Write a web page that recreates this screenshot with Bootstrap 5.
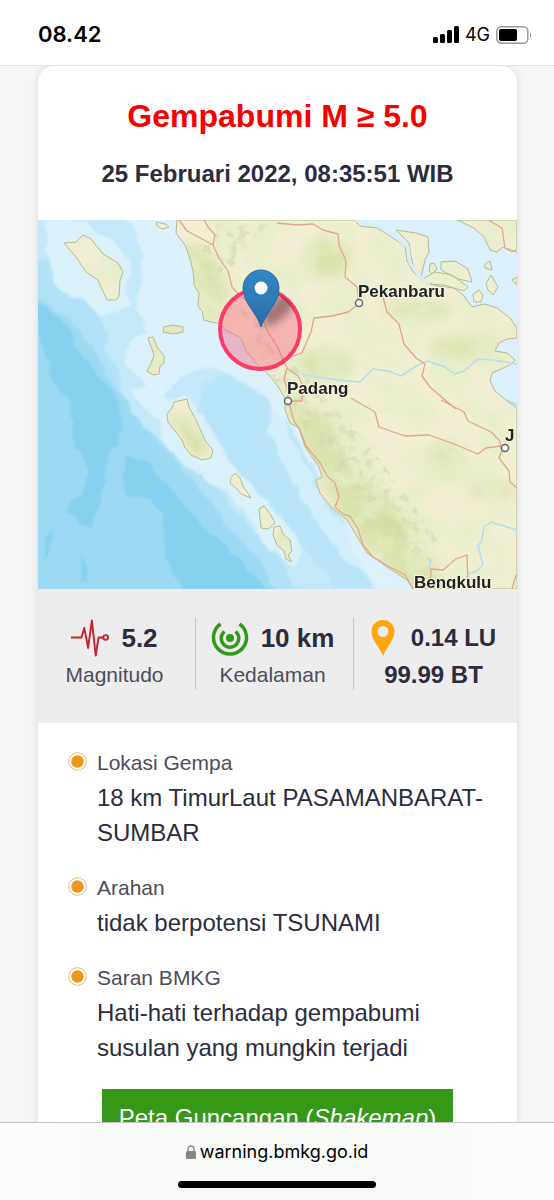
<!DOCTYPE html>
<html lang="id">
<head>
<meta charset="utf-8">
<meta name="viewport" content="width=device-width, initial-scale=1">
<title>Gempabumi M ≥ 5.0 – BMKG</title>
<link rel="stylesheet" href="https://cdn.jsdelivr.net/npm/bootstrap@5.3.0/dist/css/bootstrap.min.css">
<style>
  body { background: #f6f6f6; color: #2c2c3f; font-family: "Liberation Sans", Arial, sans-serif; }
  .status-bar { height: 66px; background: #fff; border-bottom: 1px solid #e4e4e4; color: #000; font-family: Inter, sans-serif; padding: 4px 22px 0 38px; }
  .clock { font-size: 22px; font-weight: 600; }
  .network { font-size: 18px; gap: 6px; }
  .page-scroll { min-height: 0; scrollbar-width: none; padding: 0 37px 0 38px; }
  .page-scroll::-webkit-scrollbar { display: none; }
  .quake { border-radius: 16px 16px 0 0; box-shadow: 0 0 8px rgba(0,0,0,.12); }
  .quake-head { padding: 28px 0 26px; line-height: 40px; }
  .quake-title { color: #f60000; font-size: 32px; line-height: 44px; }
  .quake-time { font-size: 24px; padding-top: 16px; }
  .quake-map { width: 100%; height: auto; }
  .facts { display: grid; grid-template-columns: 157fr 158fr 164fr; background: #ededed; padding: 29px 0 33px; }
  .fact { line-height: 36px; height: 72px; padding-right: 4px; }
  .fact + .fact { border-left: 1px solid #c4c4c4; }
  .fact-value { font-size: 26px; height: 39px; gap: 12px; }
  .fact-coord { font-size: 24px; }
  .light-label { font-size: 21px; color: #4d4d5c; }
  .details { padding: 22px 32px 24px 30px; line-height: 35px; gap: 20px; }
  .detail-text { font-size: 24px; }
  .bullet-icon { flex: none; margin: 7px 10px 0 0; }
  .btn-shake { background: #369817; color: #fff; border-radius: 0; font-size: 24px; line-height: 36px; padding: 10px 16px; margin-bottom: 24px; }
  .address-bar { height: 78px; border-top: 1px solid #c4c4c4; background: linear-gradient(90deg, #fcfcfc, #f7faf6 30%, #f7faf6 70%, #fcfcfc); color: #000; font: 18px/26px Inter, sans-serif; padding-top: 16px; }
  .home-bar { width: 198px; height: 7px; border-radius: 4px; background: #000; margin-top: 16px; }
</style>
</head>
<body>
<div class="d-flex flex-column vh-100">
  <header class="status-bar d-flex flex-shrink-0 align-items-center justify-content-between">
    <span class="clock">08.42</span>
    <div class="d-flex align-items-center network">
      <svg width="26" height="17" viewBox="0 0 26 17" aria-hidden="true"><rect y="11" width="5" height="6" rx="1.500"/><rect x="7" y="8" width="5" height="9" rx="1.500"/><rect x="14" y="4" width="5" height="13" rx="1.500"/><rect x="21" width="5" height="17" rx="1.500"/></svg>
      <span>4G</span>
      <svg width="36" height="18" viewBox="0 0 36 18" aria-hidden="true"><rect x=".8" y=".8" width="31" height="16.400" rx="4.500" fill="none" stroke="#999" stroke-width="1.500"/><rect x="3" y="3" width="18" height="12" rx="2"/><path d="M34 6q2 3 0 6z" fill="#888"/></svg>
    </div>
  </header>

  <main class="page-scroll flex-grow-1 overflow-auto">
    <article class="quake bg-white overflow-hidden">
      <div class="quake-head text-center">
        <h1 class="quake-title fw-bold mb-0">Gempabumi M ≥ 5.0</h1>
        <p class="quake-time fw-bold mb-0">25 Februari 2022, 08:35:51 WIB</p>
      </div>

      <svg class="quake-map d-block" viewBox="0 0 479 369" role="img" aria-label="Peta lokasi gempa">
        <defs>
          <filter id="soft" x="-30%" y="-30%" width="160%" height="160%"><feGaussianBlur stdDeviation="6"/></filter>
          <filter id="shade" x="-50%" y="-50%" width="200%" height="200%"><feGaussianBlur stdDeviation="4"/></filter>
          <filter id="edge" x="-10%" y="-10%" width="120%" height="120%"><feTurbulence type="fractalNoise" baseFrequency=".06" numOctaves="3" seed="4"/><feDisplacementMap in="SourceGraphic" scale="10" xChannelSelector="R" yChannelSelector="G"/><feGaussianBlur stdDeviation="1"/></filter>
          <filter id="forest" x="0" y="0" width="100%" height="100%"><feTurbulence type="fractalNoise" baseFrequency=".03" numOctaves="4" seed="12"/><feColorMatrix values="0 0 0 0 .79  0 0 0 0 .86  0 0 0 0 .60  3.600 0 0 0 -1.500"/></filter>
          <filter id="relief" x="0" y="0" width="100%" height="100%"><feTurbulence type="fractalNoise" baseFrequency=".11" numOctaves="3" seed="8"/><feColorMatrix values="0 0 0 0 .64  0 0 0 0 .68  0 0 0 0 .42  5 0 0 0 -2.500"/></filter>
          <path id="sumatra" d="M139 0L138 13 147 25 152 39 155 51 156 65 161 73 160 86 164 91 166 100 177 103 182 103 187 110 203 118 208 131 220 145 230 154 239 165 247 178 247 190 252 203 261 208 267 227 281 247 284 257 278 260 282 273 294 288 309 300 317 313 329 333 349 347 369 360 376 369H479V188L469 181 457 171 452 161 454 153 472 145 477 140 469 133 457 131 461 123 469 119 479 118V108L472 98 459 88 446 84 434 87 426 76 416 68 399 66 386 61 376 53 369 41 367 26 352 16 339 8 322 6 316 0z"/>
          <path id="isles" d="M26 23L38 22 45 15 53 19 65 34 80 43 85 52 82 60 81 76 78 80 69 80 63 67 60 60 48 52 38 37zM118 2L127 4 131 7 124 9 119 6zM126 107L135 105 145 107 145 112 135 114 125 112zM110 118L115 117 119 127 126 136 126 143 122 146 121 154 115 155 109 151 114 141 116 135zM136 182L149 179 151 187 158 200 168 222 175 230 173 238 164 240 153 235 147 228 144 220 130 202 129 194 134 188zM193 258L197 253 202 258 205 266 213 278 203 274 198 268 192 263zM221 289L226 286 232 294 237 303 230 309 223 308zM236 307L242 306 245 314 252 320 254 331 250 335 254 342 248 339 246 331 239 325 235 315zM358 10L378 13 390 17 391 32 387 40 383 57 376 50 373 36 371 23zM392 44L396 43 399 49 394 54 391 51zM403 42L417 41 430 49 434 62 420 59 403 50zM386 58L397 52 414 55 430 67 426 71 406 65 389 64zM435 74L441 70 445 75 443 82 436 82zM447 44L452 41 454 50 447 48zM448 64L453 55 460 67 455 75 450 70zM474 60L479 57V65z"/>
          <path id="malaya" d="M419 0L436 8 446 17 452 30 459 32 465 27 474 32 479 29V0z"/>
          <clipPath id="landclip"><use href="#sumatra"/><use href="#isles"/><use href="#malaya"/></clipPath>
          <clipPath id="ring"><circle cx="222" cy="109" r="40"/></clipPath>
          <clipPath id="hills"><path d="M200 85L230 70 249 140 290 175 330 225 365 270 400 320 392 350 350 310 320 285 287 240 256 190 230 150zM146 20L170 26 178 5 230 4 210 38 172 60z"/></clipPath>
          <linearGradient id="pin" x2="0" y2="1"><stop stop-color="#3388c6"/><stop offset="1" stop-color="#286da8"/></linearGradient>
        </defs>

        <!-- sea, by depth -->
        <rect width="479" height="369" fill="#dcf1fb"/>
        <g filter="url(#edge)">
          <path fill="#c3e8f8" d="M-15-15H63L93 5 105 28 104 64 96 90 111 112 91 120 88 146 113 169 127 174 145 156 171 146 190 153 218 175 248 202 279 256 318 337 338 369V390H-15z"/>
          <path fill="#b0e1f6" d="M-15 48L14 39 24 68 56 90 72 116 67 130 80 149 84 174 105 210 129 222 160 246 193 287 224 320 245 344 265 390H-15z"/>
          <path fill="#dff3fc" opacity=".85" d="M8 0H46L74 22 94 43 86 72 93 84 64 96 46 79 22 70 10 43zM90 171L120 163 132 179 150 176 164 194 180 226 208 248 239 286 264 326 259 350 236 334 216 304 187 272 147 246 123 219 121 202z"/>
          <path fill="#9cdaf3" d="M-15 73L12 84 31 99 50 124 68 151 82 173 106 206 134 235 161 270 191 306 222 342 245 390H-15z"/>
          <path fill="#86d1ef" d="M-5 82L14 90 36 117 55 151 79 174 85 206 69 237 66 265 55 309 42 302 27 292 29 284 44 275 51 249 37 229 32 181 13 158 5 128zM89 237L108 242 128 264 156 297 200 339 236 377H149L135 353 126 327 125 294 110 278 91 276 84 260zM42 334L49 348 51 360 43 363zM14 308L16 323 6 341 8 321z"/>
          <path fill="#b8e4f7" d="M166 164L188 153 220 170 249 204 275 258 301 294 332 369H300L270 333 246 301 217 269 194 244 176 216 161 186z"/>
          <path fill="#e0f4fd" opacity=".7" d="M237 177L256 226 276 263 300 298 322 332 367 369H350L307 340 278 303 254 261 230 211z"/>
        </g>

        <!-- land -->
        <g fill="#f2efd4"><use href="#sumatra"/><use href="#isles"/><use href="#malaya"/></g>
        <g clip-path="url(#landclip)">
          <g filter="url(#soft)" fill="#d3dfa3">
            <path d="M142 25L170 28 190 62 186 98 161 98zM235 140L260 182 290 195 325 250 370 300 410 369H370L310 310 282 260 250 205z" opacity=".8"/>
            <ellipse cx="290" cy="38" rx="22" ry="20" opacity=".8"/><ellipse cx="285" cy="145" rx="30" ry="14" opacity=".8"/><ellipse cx="380" cy="90" rx="34" ry="10" opacity=".7"/><ellipse cx="408" cy="240" rx="18" ry="18" opacity=".7"/><ellipse cx="428" cy="128" rx="38" ry="12" opacity=".7"/><ellipse cx="345" cy="305" rx="24" ry="20"/><ellipse cx="455" cy="270" rx="24" ry="9" opacity=".6"/>
            <path d="M130 190l30 18 13 22-15 8zM110 120l12 14-4 20-8-2zM125 105h20v9h-20zM238 307l13 12 2 20-12-14z"/>
          </g>
          <rect width="479" height="369" filter="url(#forest)" opacity=".8"/>
          <g clip-path="url(#hills)" opacity=".6"><rect width="479" height="369" filter="url(#relief)"/></g>
        </g>
        <g fill="none" stroke="#b5b98f"><use href="#sumatra"/><use href="#isles"/><use href="#malaya"/></g>
        <path d="M317 0L340 6 354 14 370 27 372 43 380 55 392 64" fill="none" stroke="#d8effa" stroke-width="3" stroke-linejoin="round"/>

        <!-- rivers -->
        <path fill="none" stroke="#b2dfea" stroke-width="1.500" stroke-linejoin="round" d="M263 154L278 157 300 160 322 162 335 149 350 151 363 156 380 145 390 141 407 147 417 154 426 151 440 139 455 140 479 144M479 310L453 302 446 307 444 320 440 326 445 345 437 352 430 354M393 340L391 350M469 180L479 185"/>
        <!-- roads -->
        <path fill="none" stroke="#e0a58c" stroke-width="1.300" stroke-linejoin="round" d="M141 0L149 11 166 20 175 25 181 38 190 51 194 67 202 76 222 90 229 110 240 128 249 148M166 0L170 7 177 15 175 25M239 3L259 5 275 4 285 10 300 14 301 25 308 41 307 57 319 67 321 84 310 92 294 96 276 98 273 112 264 133 249 138M345 77L349 92 361 104 366 124 378 138 387 144 384 156 392 167 407 180 418 189M403 180L426 192 430 201 453 212 461 220 464 228M313 178L337 192 341 207 367 216 391 215 416 224 440 234 448 228 462 226 464 230 461 238 471 251 472 262 479 268M249 148L246 159 250 171 250 180 256 201 262 210 268 226 283 244 289 256 297 263 301 277 297 287 305 294 312 296 320 309 325 325 335 337 350 346 367 355 375 369M249 148L260 156 265 166 264 181 250 181M392 369L393 349 405 350 418 339 429 335 430 364M450 0L464 8 467 28 479 32M474 369L478 355"/>

        <!-- affected radius -->
        <circle cx="222" cy="109" r="40" fill="#ff5878" fill-opacity=".38" stroke="#fc3b6c" stroke-width="4"/>
        <g clip-path="url(#ring)"><ellipse cx="242" cy="88" rx="9" ry="22" transform="rotate(42 242 88)" fill="#4e3038" opacity=".5" filter="url(#shade)"/></g>
        <path d="M223 107C219 93 205 83 205 68a18 18 0 0 1 36 0C241 83 228 93 223 107z" fill="url(#pin)" stroke="#2a6ca4"/>
        <circle cx="223" cy="68" r="6.500" fill="#fff"/>

        <!-- towns -->
        <g fill="#fff" stroke="#666" stroke-width="1.500"><circle cx="321" cy="83" r="3.500"/><circle cx="250" cy="181" r="3.500"/><circle cx="467" cy="228" r="3.500"/></g>
        <g font-family="Liberation Sans, Arial, sans-serif" font-size="17" font-weight="700" fill="#222" stroke="#f7f6e2" stroke-width="2" paint-order="stroke">
          <text x="320" y="77">Pekanbaru</text><text x="249" y="174">Padang</text><text x="467" y="221">J</text><text x="376" y="368">Bengkulu</text>
        </g>
      </svg>

      <section class="facts text-center">
        <div class="fact">
          <div class="fact-value fw-bold d-flex align-items-center justify-content-center">
            <svg width="38" height="39" viewBox="0 0 40 40" fill="none" stroke="#c9202d" stroke-width="2" stroke-linejoin="round" aria-hidden="true"><path d="M0 20h11l3-10 4 21 4-29 4 37 3-19h5"/><circle cx="36.500" cy="20" r="2.500"/></svg>
            <span>5.2</span>
          </div>
          <div class="light-label">Magnitudo</div>
        </div>
        <div class="fact">
          <div class="fact-value fw-bold d-flex align-items-center justify-content-center">
            <svg width="38" height="38" viewBox="0 0 38 38" fill="none" stroke="#32991a" stroke-width="3.500" aria-hidden="true"><path d="M9.500 5a16.500 16.500 0 1 0 19 0M13.500 12.500a8.800 8.800 0 1 0 11 0"/><circle cx="19" cy="19" r="4" fill="#32991a" stroke="none"/></svg>
            <span>10 km</span>
          </div>
          <div class="light-label">Kedalaman</div>
        </div>
        <div class="fact fw-bold">
          <div class="fact-value d-flex align-items-center justify-content-center">
            <svg class="me-1" width="24" height="36" viewBox="0 0 24 36" aria-hidden="true"><path fill="#ffa60c" fill-rule="evenodd" d="M12 0A11.500 11.500 0 0 0 .5 11.500C.5 20 8 26 12 36 16 26 23.500 20 23.500 11.500A11.500 11.500 0 0 0 12 0zm0 6a5.500 5.500 0 1 1 0 11 5.500 5.500 0 0 1 0-11z"/></svg>
            <span class="fact-coord">0.14 LU</span>
          </div>
          <div class="fact-coord">99.99 BT</div>
        </div>
      </section>

      <section class="details d-flex flex-column">
        <div class="d-flex">
          <svg class="bullet-icon" width="19" height="19" viewBox="0 0 19 19" aria-hidden="true"><circle cx="9.500" cy="9.500" r="8.800" fill="#fff" stroke="#f2b568"/><circle cx="9.500" cy="9.500" r="6.200" fill="#ec971c"/></svg>
          <div><div class="light-label">Lokasi Gempa</div><div class="detail-text">18 km TimurLaut PASAMANBARAT-SUMBAR</div></div>
        </div>
        <div class="d-flex">
          <svg class="bullet-icon" width="19" height="19" viewBox="0 0 19 19" aria-hidden="true"><circle cx="9.500" cy="9.500" r="8.800" fill="#fff" stroke="#f2b568"/><circle cx="9.500" cy="9.500" r="6.200" fill="#ec971c"/></svg>
          <div><div class="light-label">Arahan</div><div class="detail-text">tidak berpotensi TSUNAMI</div></div>
        </div>
        <div class="d-flex">
          <svg class="bullet-icon" width="19" height="19" viewBox="0 0 19 19" aria-hidden="true"><circle cx="9.500" cy="9.500" r="8.800" fill="#fff" stroke="#f2b568"/><circle cx="9.500" cy="9.500" r="6.200" fill="#ec971c"/></svg>
          <div><div class="light-label">Saran BMKG</div><div class="detail-text">Hati-hati terhadap gempabumi susulan yang mungkin terjadi</div></div>
        </div>
      </section>
      <div class="text-center"><button type="button" class="btn btn-shake">Peta Guncangan (<em>Shakemap</em>)</button></div>
    </article>
  </main>

  <footer class="address-bar d-flex flex-shrink-0 flex-column align-items-center">
    <div class="d-flex align-items-center">
      <svg class="me-1" width="10" height="14" viewBox="0 0 10 14" aria-hidden="true"><rect y="6" width="10" height="8" rx="1.500" fill="#858585"/><path d="M2 7V4a3 3 0 0 1 6 0v3" fill="none" stroke="#858585" stroke-width="1.300"/></svg>
      <span>warning.bmkg.go.id</span>
    </div>
    <div class="home-bar"></div>
  </footer>
</div>
<script src="https://cdn.jsdelivr.net/npm/bootstrap@5.3.0/dist/js/bootstrap.bundle.min.js"></script>
</body>
</html>
